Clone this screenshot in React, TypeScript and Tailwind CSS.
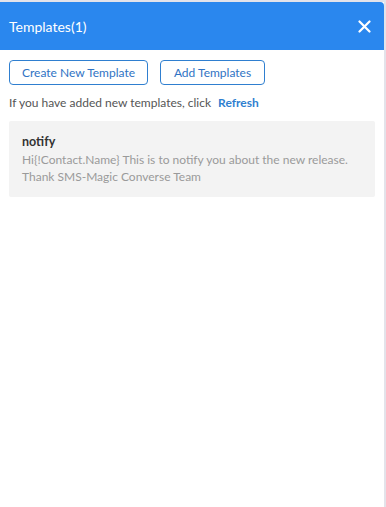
export default function App() {
  return (
    <div className="flex h-[507px] w-[386px] bg-[#e3e3ea]" style={{ fontFamily: 'Lato, "Noto Sans", sans-serif' }}>
      <div className="mt-[2px] flex h-[505px] w-[384px] flex-col bg-white">
        {/* Header */}
        <div className="flex h-[48px] items-center justify-between rounded-tr-[4px] bg-[#2a87ee] pl-[9px] pr-[13px]">
          <span className="text-[14px] text-white">Templates(1)</span>
          <svg width="13" height="13" viewBox="0 0 13 13">
            <path d="M1.5 1.5 L11.5 11.5 M11.5 1.5 L1.5 11.5" stroke="white" strokeWidth="2.2" strokeLinecap="round" />
          </svg>
        </div>

        <div className="px-[9px]">
          <div className="mt-[10px] flex gap-[12px]">
            <button className="h-[25px] w-[139px] rounded-[4px] border border-[#2f7fd0] text-[12px] text-[#2f73c4]">
              Create New Template
            </button>
            <button className="h-[25px] w-[105px] rounded-[4px] border border-[#2f7fd0] text-[12px] text-[#2f73c4]">
              Add Templates
            </button>
          </div>

          <p className="mt-[8px] text-[12px] leading-[20px] text-[#555]">
            If you have added new templates, click <span className="ml-[4px] font-bold text-[#2f7fd0]">Refresh</span>
          </p>

          <div className="mt-[8px] w-[366px] rounded-[2px] bg-[#f3f3f3] px-[13px] pb-[12px] pt-[12px]">
            <div className="text-[12.5px] font-bold leading-[18px] text-[#333]">notify</div>
            <div className="text-[12px] leading-[17px] text-[#9a9a9a]">
              Hi{'{'}!Contact.Name{'}'} This is to notify you about the new release.
              <br />
              Thank SMS-Magic Converse Team
            </div>
          </div>
        </div>
      </div>
    </div>
  )
}
